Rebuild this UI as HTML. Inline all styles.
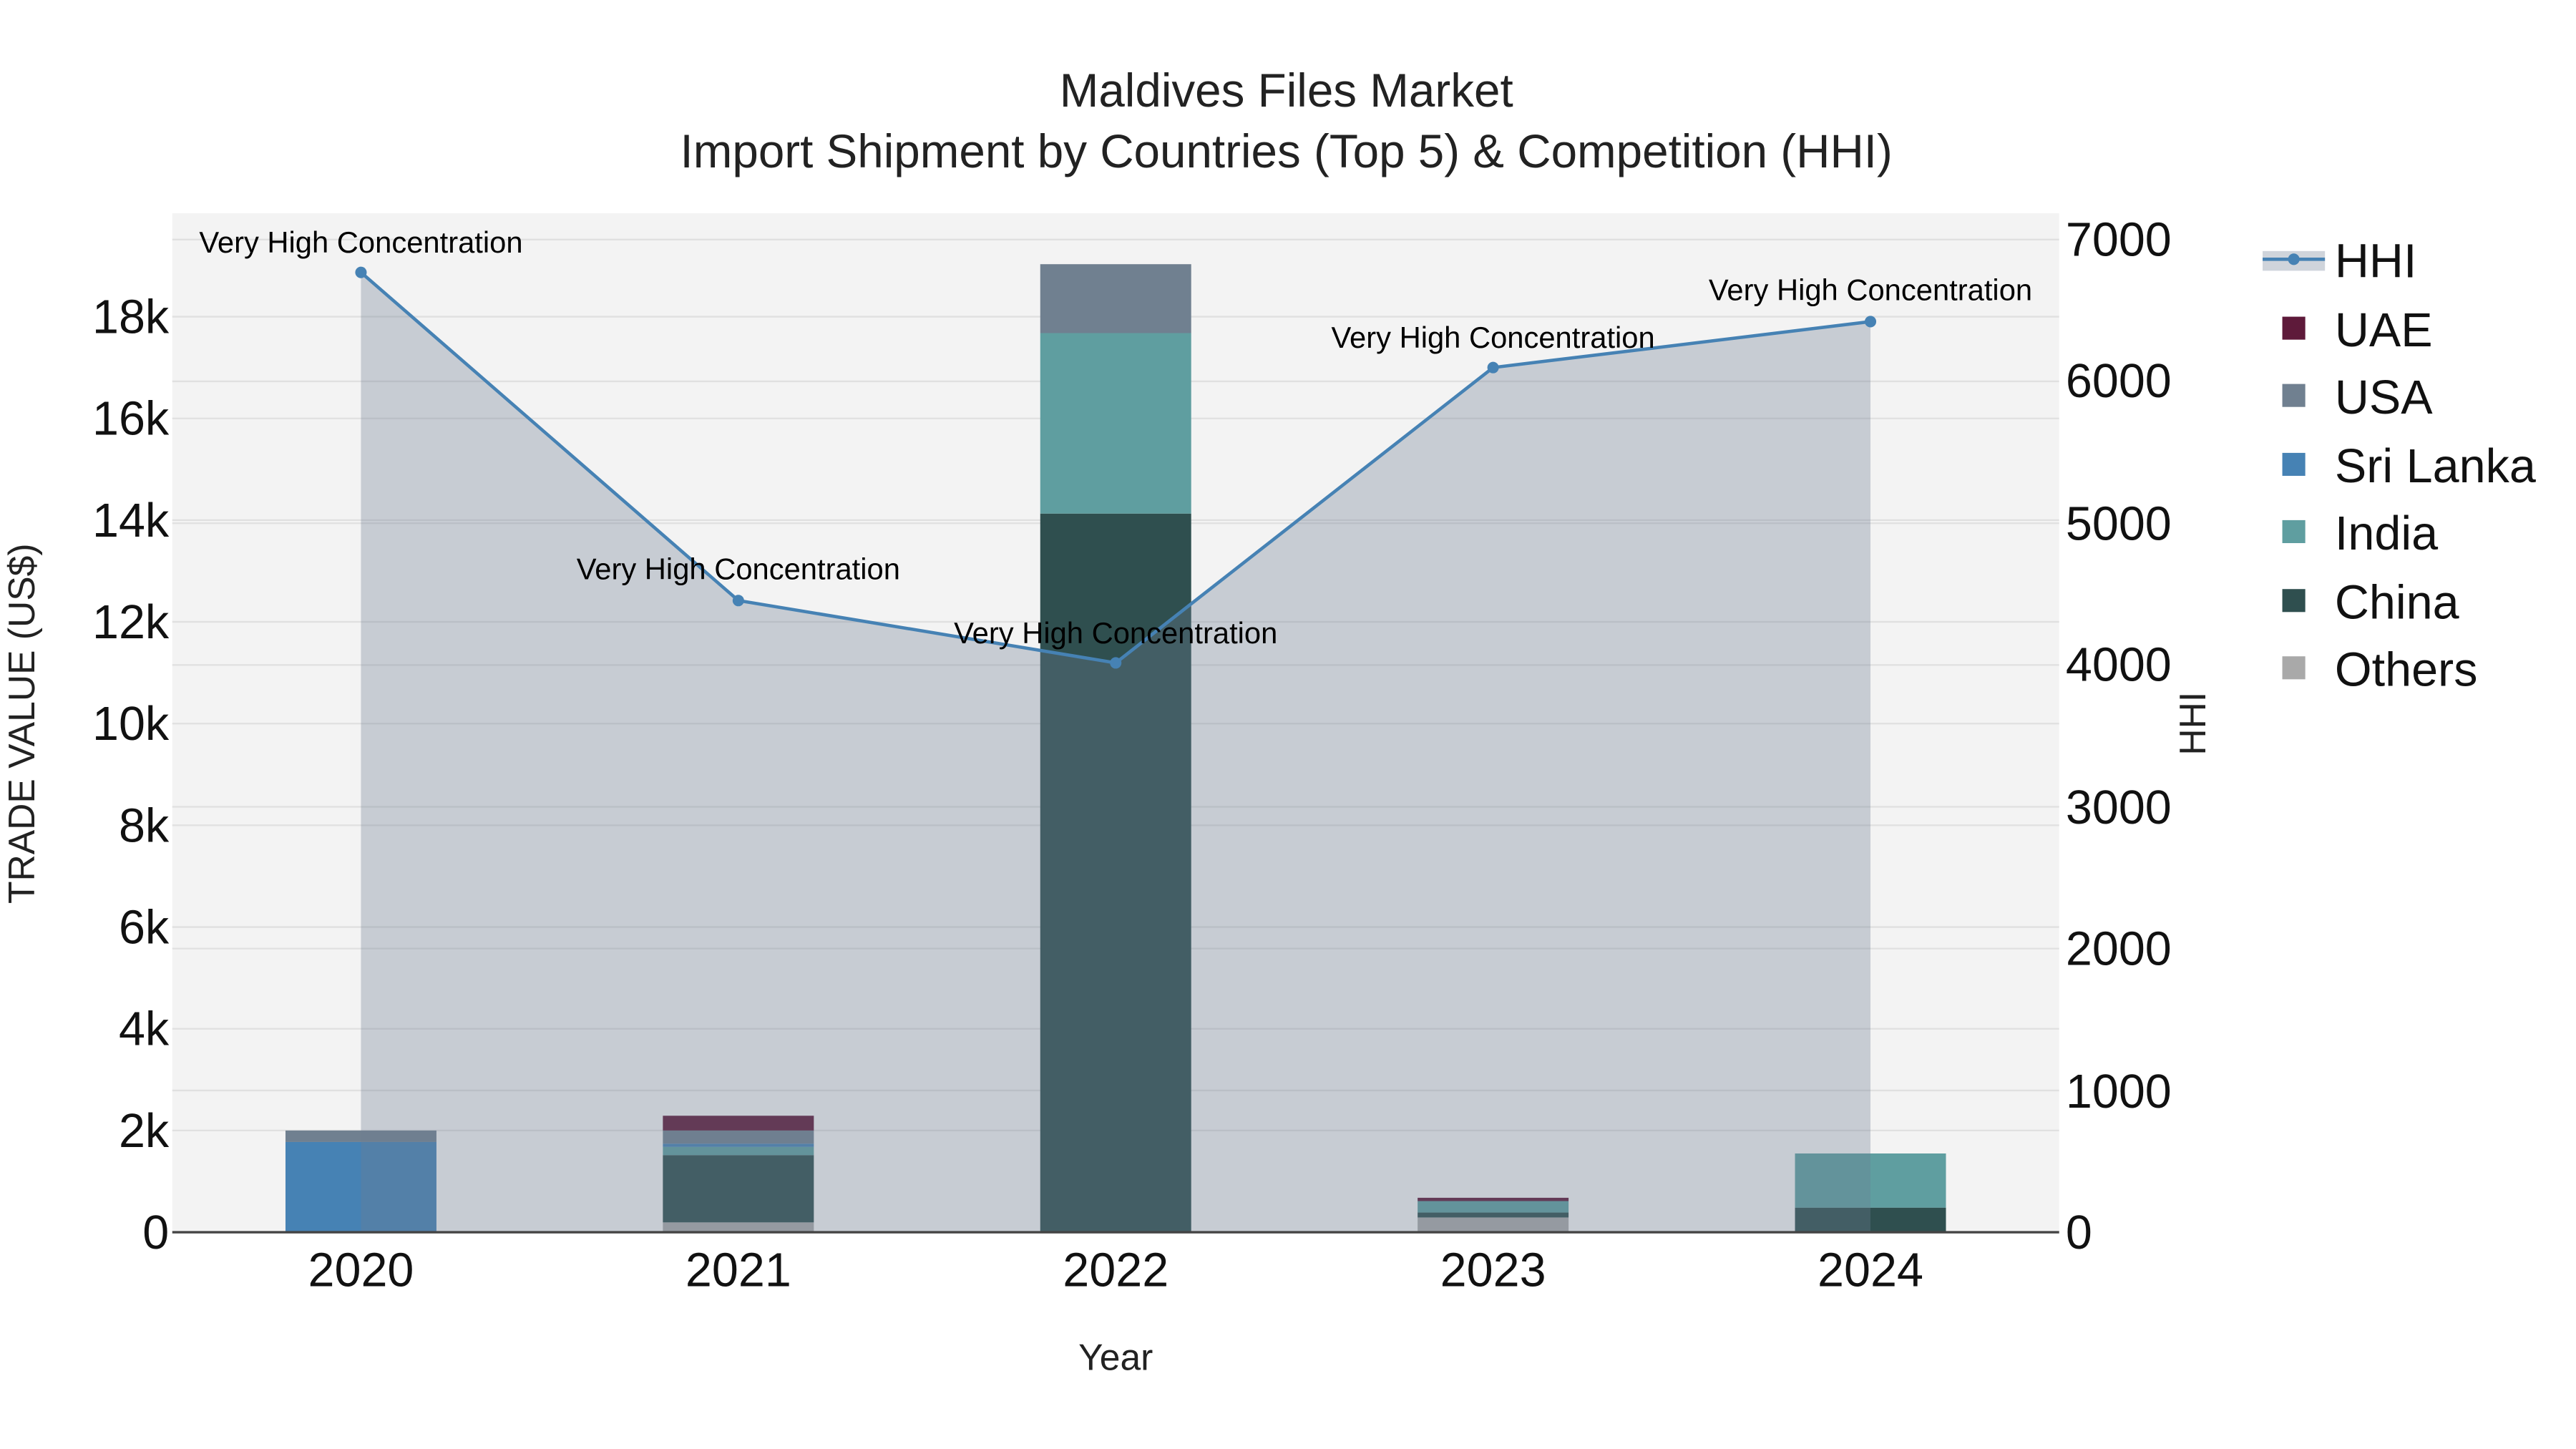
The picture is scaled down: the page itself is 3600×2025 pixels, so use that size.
<!DOCTYPE html>
<html><head><meta charset="utf-8"><style>html,body{margin:0;padding:0;background:#fff}svg{display:block}text{font-family:"Liberation Sans",sans-serif}</style></head>
<body>
<svg width="3600" height="2025" viewBox="0 0 1570 883.1" xmlns="http://www.w3.org/2000/svg">
<rect x="0" y="0" width="1570" height="884" fill="#fff"/>
<rect x="105" y="130" width="1150" height="621" fill="#f3f3f3"/>
<g stroke="#e0e0e0" stroke-width="1">
<line x1="105" x2="1255" y1="689" y2="689"/><line x1="105" x2="1255" y1="627" y2="627"/><line x1="105" x2="1255" y1="565" y2="565"/><line x1="105" x2="1255" y1="503" y2="503"/><line x1="105" x2="1255" y1="441" y2="441"/><line x1="105" x2="1255" y1="379" y2="379"/><line x1="105" x2="1255" y1="317" y2="317"/><line x1="105" x2="1255" y1="255" y2="255"/><line x1="105" x2="1255" y1="193" y2="193"/>
<line x1="105" x2="1255" y1="664.6" y2="664.6"/><line x1="105" x2="1255" y1="578.1" y2="578.1"/><line x1="105" x2="1255" y1="491.7" y2="491.7"/><line x1="105" x2="1255" y1="405.3" y2="405.3"/><line x1="105" x2="1255" y1="318.9" y2="318.9"/><line x1="105" x2="1255" y1="232.4" y2="232.4"/><line x1="105" x2="1255" y1="146" y2="146"/>
</g>
<g>
<rect x="174" y="696" width="92" height="55" fill="#4682b4"/>
<rect x="174" y="689" width="92" height="7" fill="#708090"/>
<rect x="404" y="745" width="92" height="6" fill="#a9a9a9"/>
<rect x="404" y="704" width="92" height="41" fill="#2f4f4f"/>
<rect x="404" y="699" width="92" height="5" fill="#5f9ea0"/>
<rect x="404" y="697" width="92" height="2" fill="#4682b4"/>
<rect x="404" y="689" width="92" height="8" fill="#708090"/>
<rect x="404" y="680" width="92" height="9" fill="#5e1a3a"/>
<rect x="634" y="313" width="92" height="438" fill="#2f4f4f"/>
<rect x="634" y="203" width="92" height="110" fill="#5f9ea0"/>
<rect x="634" y="161" width="92" height="42" fill="#708090"/>
<rect x="864" y="742" width="92" height="9" fill="#a9a9a9"/>
<rect x="864" y="739" width="92" height="3" fill="#2f4f4f"/>
<rect x="864" y="732" width="92" height="7" fill="#5f9ea0"/>
<rect x="864" y="730" width="92" height="2" fill="#5e1a3a"/>
<rect x="1094" y="736" width="92" height="15" fill="#2f4f4f"/>
<rect x="1094" y="703" width="92" height="33" fill="#5f9ea0"/>
</g>
<path d="M220,166 L450,366 L680,404 L910,224 L1140,196 L1140,751 L220,751 Z" fill="rgb(110,125,145)" fill-opacity="0.33"/>
<polyline points="220,166 450,366 680,404 910,224 1140,196" fill="none" stroke="#4682b4" stroke-width="2"/>
<g fill="#4682b4"><circle cx="220" cy="166" r="3.5"/><circle cx="450" cy="366" r="3.5"/><circle cx="680" cy="404" r="3.5"/><circle cx="910" cy="224" r="3.5"/><circle cx="1140" cy="196" r="3.5"/></g>
<line x1="105" x2="1255" y1="751" y2="751" stroke="#444" stroke-width="1.5"/>
<g font-size="18.2" text-anchor="middle" fill="#000">
<text x="220" y="154">Very High Concentration</text>
<text x="450" y="353">Very High Concentration</text>
<text x="680" y="392">Very High Concentration</text>
<text x="910" y="212">Very High Concentration</text>
<text x="1140" y="183">Very High Concentration</text>
</g>
<g font-size="28.6" text-anchor="middle" fill="#222">
<text x="784" y="65">Maldives Files Market</text>
<text x="784" y="102">Import Shipment by Countries (Top 5) &amp; Competition (HHI)</text>
</g>
<g font-size="29" text-anchor="end" fill="#111">
<text x="103" y="761">0</text><text x="103" y="699">2k</text><text x="103" y="637">4k</text><text x="103" y="575">6k</text><text x="103" y="513">8k</text><text x="103" y="451">10k</text><text x="103" y="389">12k</text><text x="103" y="327">14k</text><text x="103" y="265">16k</text><text x="103" y="203">18k</text>
</g>
<g font-size="29" text-anchor="start" fill="#111">
<text x="1259" y="761">0</text><text x="1259" y="675">1000</text><text x="1259" y="588">2000</text><text x="1259" y="502">3000</text><text x="1259" y="415">4000</text><text x="1259" y="329">5000</text><text x="1259" y="242">6000</text><text x="1259" y="156">7000</text>
</g>
<g font-size="29" text-anchor="middle" fill="#111">
<text x="220" y="784">2020</text><text x="450" y="784">2021</text><text x="680" y="784">2022</text><text x="910" y="784">2023</text><text x="1140" y="784">2024</text>
</g>
<text x="680" y="835" font-size="22.5" text-anchor="middle" fill="#222">Year</text>
<text transform="translate(21,441) rotate(-90)" font-size="22.5" text-anchor="middle" fill="#222">TRADE VALUE (US$)</text>
<text transform="translate(1344,441) rotate(-90)" font-size="22.5" text-anchor="middle" fill="#222">HHI</text>
<rect x="1379" y="153" width="38" height="12" fill="rgb(110,125,145)" fill-opacity="0.33"/>
<line x1="1379" x2="1417" y1="158" y2="158" stroke="#4682b4" stroke-width="2"/>
<circle cx="1398" cy="158" r="3.5" fill="#4682b4"/>
<rect x="1391" y="193" width="14" height="14" fill="#5e1a3a"/>
<rect x="1391" y="234" width="14" height="14" fill="#708090"/>
<rect x="1391" y="276" width="14" height="14" fill="#4682b4"/>
<rect x="1391" y="317" width="14" height="14" fill="#5f9ea0"/>
<rect x="1391" y="359" width="14" height="14" fill="#2f4f4f"/>
<rect x="1391" y="400" width="14" height="14" fill="#a9a9a9"/>
<g font-size="29" fill="#111">
<text x="1423" y="169">HHI</text><text x="1423" y="211">UAE</text><text x="1423" y="252">USA</text><text x="1423" y="294">Sri Lanka</text><text x="1423" y="335">India</text><text x="1423" y="377">China</text><text x="1423" y="418">Others</text>
</g>
</svg>
</body></html>
